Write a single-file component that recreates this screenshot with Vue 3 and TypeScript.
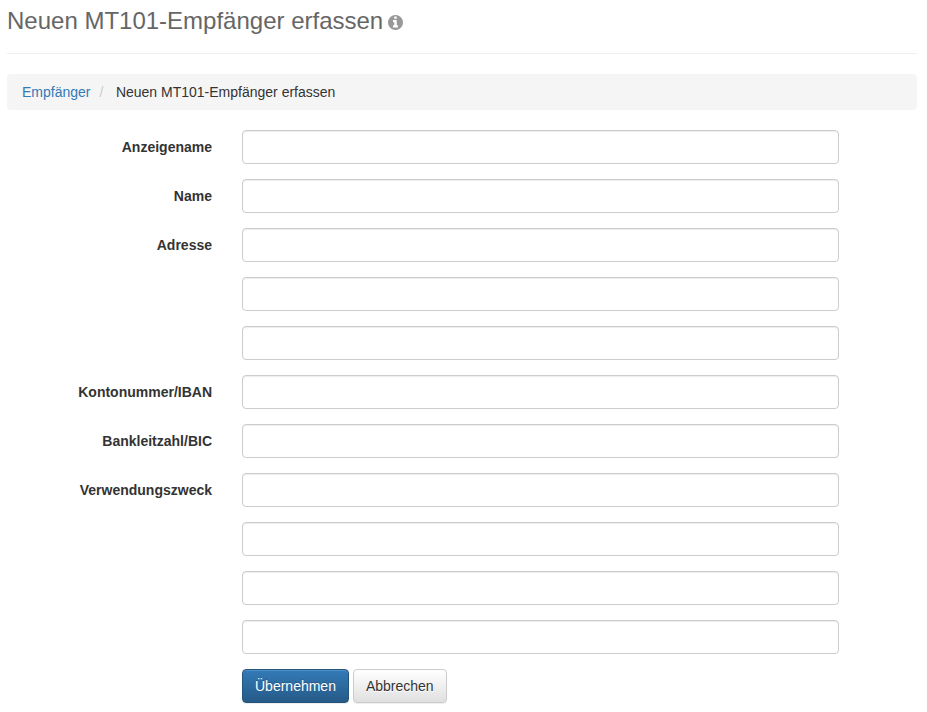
<script setup lang="ts">
interface Row { label: string; id: string }
const rows: Row[] = [
  { label: 'Anzeigename', id: 'a' },
  { label: 'Name', id: 'n' },
  { label: 'Adresse', id: 'ad1' },
  { label: '', id: 'ad2' },
  { label: '', id: 'ad3' },
  { label: 'Kontonummer/IBAN', id: 'k' },
  { label: 'Bankleitzahl/BIC', id: 'b' },
  { label: 'Verwendungszweck', id: 'v1' },
  { label: '', id: 'v2' },
  { label: '', id: 'v3' },
  { label: '', id: 'v4' },
]
</script>

<template>
  <div class="page">
    <div class="page-header">
      <h2 class="title">
        Neuen MT101-Empfänger erfassen
        <svg class="info" viewBox="128 128 1536 1536" aria-hidden="true">
          <path d="M1152 1376v-160q0-14-9-23t-23-9h-96v-512q0-14-9-23t-23-9h-320q-14 0-23 9t-9 23v160q0 14 9 23t23 9h96v320h-96q-14 0-23 9t-9 23v160q0 14 9 23t23 9h448q14 0 23-9t9-23zm-128-896v-160q0-14-9-23t-23-9h-192q-14 0-23 9t-9 23v160q0 14 9 23t23 9h192q14 0 23-9t9-23zm640 416q0 209-103 385.5t-279.5 279.5-385.5 103-385.5-103-279.5-279.5-103-385.5 103-385.5 279.5-279.5 385.5-103 385.5 103 279.5 279.5 103 385.5z" />
        </svg>
      </h2>
    </div>
    <ol class="breadcrumb">
      <li><a href="#">Empfänger</a></li>
      <li class="sep">/</li>
      <li class="active">Neuen MT101-Empfänger erfassen</li>
    </ol>
    <form class="form" @submit.prevent>
      <template v-for="row in rows" :key="row.id">
        <label class="label" :for="row.id">{{ row.label }}</label>
        <input :id="row.id" class="control" type="text" />
      </template>
      <div class="actions">
        <button class="btn primary" type="submit">Übernehmen</button>
        <button class="btn default" type="button">Abbrechen</button>
      </div>
    </form>
  </div>
</template>

<style>
html, body { margin: 0; background: #fff; }
</style>

<style scoped>
.page {
  box-sizing: border-box;
  width: 927px;
  padding: 8px 10px 9px 7px;
  font-family: "Liberation Sans", Arial, sans-serif;
  font-size: 14px;
  line-height: 20px;
  color: #333;
}
.page-header {
  padding-bottom: 19px;
  border-bottom: 1px solid #eee;
  margin-bottom: 20px;
}
.title {
  margin: 0;
  font-size: 24px;
  font-weight: 500;
  line-height: 26px;
  color: #666;
}
.info {
  width: 15px;
  height: 15px;
  margin-left: -2px;
  fill: #999;
  vertical-align: -1px;
}
.breadcrumb {
  display: flex;
  list-style: none;
  margin: 0 0 20px;
  padding: 8px 15px;
  background: #f5f5f5;
  border-radius: 4px;
}
.breadcrumb a {
  color: #337ab7;
  text-decoration: none;
}
.sep {
  color: #ccc;
  padding: 0 5px;
  margin: 0 0 0 4px;
}
.active {
  color: #333;
  margin-left: 7.5px;
}
.form {
  display: grid;
  grid-template-columns: 205px 597px;
  column-gap: 30px;
  row-gap: 15px;
}
.label {
  padding-top: 7px;
  text-align: right;
  font-weight: 700;
}
.control {
  box-sizing: border-box;
  display: block;
  width: 100%;
  height: 34px;
  padding: 6px 12px;
  font: inherit;
  color: #555;
  background: #fff;
  border: 1px solid #ccc;
  border-radius: 4px;
  box-shadow: inset 0 1px 1px rgba(0, 0, 0, 0.075);
}
.actions {
  grid-column: 2;
  display: flex;
  gap: 4px;
}
.btn {
  box-sizing: border-box;
  height: 34px;
  padding: 6px 12px;
  font: inherit;
  border: 1px solid transparent;
  border-radius: 4px;
  cursor: pointer;
  text-shadow: 0 -1px 0 rgba(0, 0, 0, 0.2);
  box-shadow: inset 0 1px 0 rgba(255, 255, 255, 0.15), 0 1px 1px rgba(0, 0, 0, 0.075);
}
.primary {
  color: #fff;
  background: linear-gradient(to bottom, #337ab7 0, #265a88 100%);
  border-color: #245580;
}
.default {
  color: #333;
  text-shadow: 0 1px 0 #fff;
  background: linear-gradient(to bottom, #fff 0, #e0e0e0 100%);
  border-color: #ccc;
}
</style>
